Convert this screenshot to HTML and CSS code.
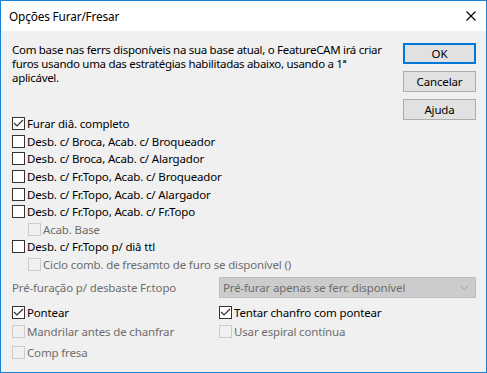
FILE: index.html
```html
<!DOCTYPE html>
<html lang="pt">
<head>
    <meta charset="UTF-8">
    <title>Opções Furar/Fresar</title>
    <link rel="stylesheet" href="styles.css">
</head>
<body>
    <div class="window">
        <div class="titlebar">
            <span class="title">Opções Furar/Fresar</span>
            <svg class="close" width="10" height="10" viewBox="0 0 10 10">
                <path d="M0.5 0.5 L9.5 9.5 M9.5 0.5 L0.5 9.5" stroke="#000" stroke-width="1.1" fill="none"/>
            </svg>
        </div>
        <div class="content">
            <div class="top">
                <p class="intro">Com base nas ferrs disponíveis na sua base atual, o FeatureCAM irá criar furos usando uma das estratégias habilitadas abaixo, usando a 1ª<br>aplicável.</p>
                <div class="buttons">
                    <button class="btn default">OK</button>
                    <button class="btn">Cancelar</button>
                    <button class="btn">Ajuda</button>
                </div>
                <div class="list">
                    <label class="check"><span class="box checked"></span>Furar diâ. completo</label>
                    <label class="check"><span class="box"></span>Desb. c/ Broca, Acab. c/ Broqueador</label>
                    <label class="check"><span class="box"></span>Desb. c/ Broca, Acab. c/ Alargador</label>
                    <label class="check"><span class="box"></span>Desb. c/ Fr.Topo, Acab. c/ Broqueador</label>
                    <label class="check"><span class="box"></span>Desb. c/ Fr.Topo, Acab. c/ Alargador</label>
                    <label class="check"><span class="box"></span>Desb. c/ Fr.Topo, Acab. c/ Fr.Topo</label>
                    <label class="check sub disabled"><span class="box"></span>Acab. Base</label>
                    <label class="check"><span class="box"></span>Desb. c/ Fr.Topo p/ diâ ttl</label>
                    <label class="check sub disabled"><span class="box"></span>Ciclo comb. de fresamto de furo se disponível ()</label>
                </div>
            </div>
            <div class="prefuro">
                <span class="label">Pré-furação p/ desbaste Fr.topo</span>
                <div class="select">
                    <span>Pré-furar apenas se ferr. disponível</span>
                    <svg width="9" height="5" viewBox="0 0 9 5">
                        <polyline points="0.5,0.5 4.5,4.5 8.5,0.5" stroke="#a0a0a0" fill="none"/>
                    </svg>
                </div>
            </div>
            <div class="bottom">
                <label class="check"><span class="box checked"></span>Pontear</label>
                <label class="check"><span class="box checked"></span>Tentar chanfro com pontear</label>
                <label class="check disabled row2"><span class="box"></span>Mandrilar antes de chanfrar</label>
                <label class="check disabled row2"><span class="box"></span>Usar espiral contínua</label>
                <label class="check disabled row3"><span class="box"></span>Comp fresa</label>
            </div>
        </div>
    </div>
</body>
</html>
```
FILE: styles.css
```css
body {
    margin: 0;
    font-family: "Noto Sans", sans-serif;
    font-size: 11.5px;
    letter-spacing: -0.15px;
    color: #000;
}
.window {
    width: 487px;
    height: 373px;
    box-sizing: border-box;
    border: 1px solid #1883d7;
    background: #f0f0f0;
}
.titlebar {
    height: 30px;
    background: #fff;
    display: flex;
    align-items: center;
    justify-content: space-between;
    padding: 0 10px 0 8px;
}
.title {
    font-size: 11.8px;
}
.content {
    padding: 12px 10px 0 11px;
}
.top {
    display: grid;
    grid-template-columns: 1fr 73px;
    column-gap: 16px;
}
.intro {
    height: 42px;
    margin: 0 -12px 30px 0;
    line-height: 14px;
    letter-spacing: -0.3px;
}
.buttons {
    grid-row: 1 / span 2;
    grid-column: 2;
    display: flex;
    flex-direction: column;
    gap: 7px;
}
.btn {
    height: 21px;
    box-sizing: border-box;
    background: #e1e1e1;
    border: 1px solid #adadad;
    font-family: inherit;
    font-size: 11.5px;
    letter-spacing: -0.15px;
    color: #000;
    padding: 0;
}
.btn.default {
    border: 2px solid #0078d7;
}
.list {
    grid-column: 1;
    grid-row: 2;
}
.check {
    display: flex;
    align-items: center;
    height: 17.6px;
    white-space: nowrap;
}
.box {
    width: 13px;
    height: 13px;
    box-sizing: border-box;
    border: 1px solid #333;
    background: #fff;
    margin-right: 2px;
    flex: none;
}
.box.checked {
    background: #fff url("data:image/svg+xml,%3Csvg xmlns='http://www.w3.org/2000/svg' width='11' height='11'%3E%3Cpolyline points='1,5 4,8 10,2' fill='none' stroke='%23333' stroke-width='1.2'/%3E%3C/svg%3E") no-repeat center;
}
.check.sub {
    padding-left: 16px;
}
.check.disabled {
    color: #6d6d6d;
}
.check.disabled .box {
    border-color: #cccccc;
    background: #f0f0f0;
}
.prefuro {
    display: grid;
    grid-template-columns: 207px 1fr;
    align-items: center;
    margin-top: 4px;
}
.prefuro .label {
    color: #6d6d6d;
}
.select {
    height: 21px;
    box-sizing: border-box;
    background: #cccccc;
    border: 1px solid #bfbfbf;
    color: #6d6d6d;
    display: flex;
    align-items: center;
    justify-content: space-between;
    padding: 0 6px 0 3px;
}
.bottom {
    display: grid;
    grid-template-columns: 207px 1fr;
    margin-top: 5px;
}
.row2 {
    margin-top: 1.4px;
}
.row3 {
    margin-top: 3.4px;
}
```
